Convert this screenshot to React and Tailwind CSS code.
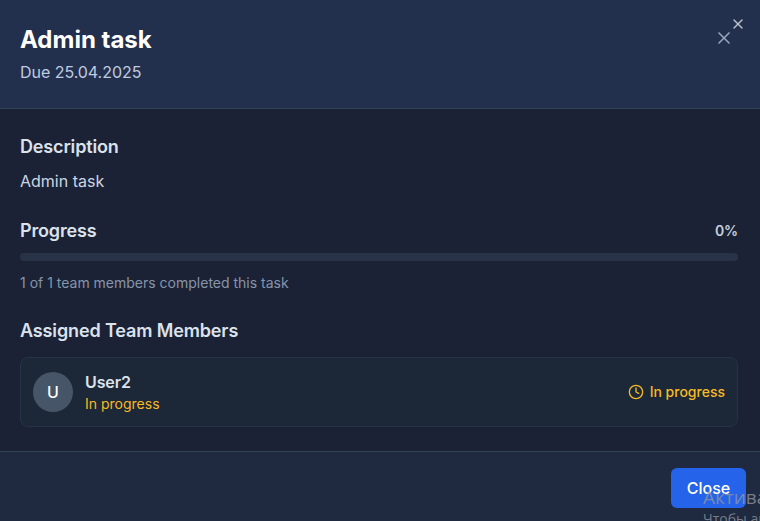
import React from "react";
import { X, Clock } from "lucide-react";

function Header() {
  return (
    <header className="relative flex h-[109px] items-start justify-between border-b border-[#334155] bg-[#23304d] pt-6 pr-[26px] pl-5">
      <div>
        <h2 className="text-2xl font-bold text-white">Admin task</h2>
        <p className="mt-1 text-base tracking-[-0.04px] text-[#bfcbe0]">Due 25.04.2025</p>
      </div>
      <button className="mt-1 text-[#94a3b8]">
        <X size={20} strokeWidth={2} />
      </button>
      <button className="absolute top-4 right-[14px] text-[#bcc3ce]">
        <X size={16} strokeWidth={2} />
      </button>
    </header>
  );
}

function Member() {
  return (
    <div className="mt-3 flex h-[70px] items-center justify-between rounded-lg border border-[#263446] bg-[#1c2737] px-3">
      <div className="flex items-center gap-3">
        <div className="flex size-10 items-center justify-center rounded-full bg-[#475569] font-medium text-white">
          U
        </div>
        <div>
          <p className="text-base font-semibold tracking-[-0.1px] text-[#dbe2ec]">User2</p>
          <p className="text-sm text-[#f5ba24]">In progress</p>
        </div>
      </div>
      <div className="flex items-center gap-1.5 text-sm font-medium text-[#f5ba24]">
        <Clock size={16} />
        <span>In progress</span>
      </div>
    </div>
  );
}

export default function App() {
  return (
    <div className="relative flex h-[521px] w-[760px] flex-col overflow-hidden bg-[#1b2236] font-['Inter',sans-serif]">
      <Header />
      <main className="h-[342px] pt-6 pr-[22px] pl-5">
        <h3 className="text-lg font-semibold tracking-[-0.15px] text-[#dbe2ec]">Description</h3>
        <p className="mt-2 text-base text-[#cbd5e1]">Admin task</p>
        <div className="mt-6 flex items-center justify-between">
          <h3 className="text-lg font-semibold tracking-[-0.15px] text-[#dbe2ec]">Progress</h3>
          <span className="text-sm font-semibold tracking-[-0.1px] text-[#c5cfdb]">0%</span>
        </div>
        <div className="mt-2 h-2 rounded-full bg-[#283347]" />
        <p className="mt-3 text-sm text-[#8794aa]">1 of 1 team members completed this task</p>
        <h3 className="mt-6 text-lg font-semibold tracking-[-0.13px] text-[#dbe2ec]">Assigned Team Members</h3>
        <Member />
      </main>
      <footer className="flex h-[70px] items-start justify-end border-t border-[#334155] bg-[#1f293f] pt-4 pr-[14px]">
        <button className="h-10 w-[75px] rounded-md bg-[#2563eb] text-base font-medium text-white">Close</button>
      </footer>
      <div className="pointer-events-none absolute top-[485px] left-[703px] font-['Open_Sans',sans-serif] whitespace-nowrap text-[#8f949c]/80">
        <p className="text-[19px] leading-6">Активация Windows</p>
        <p className="text-[14px] leading-5">Чтобы активировать Windows</p>
      </div>
    </div>
  );
}
